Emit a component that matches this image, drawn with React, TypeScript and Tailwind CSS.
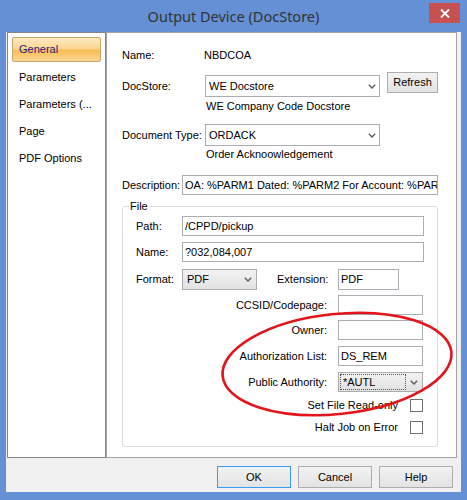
import type { ReactNode } from 'react';

const Chevron = () => (
  <svg width="8" height="5" viewBox="0 0 8 5" className="shrink-0">
    <path d="M0.8 0.8 L4 4 L7.2 0.8" fill="none" stroke="#5c5c5c" strokeWidth="1.4" />
  </svg>
);

function TextBox({ value = '', className = '' }: { value?: string; className?: string }) {
  return (
    <div
      className={`h-[20px] bg-white border border-[#abadb3] flex items-center pl-[2px] overflow-hidden whitespace-nowrap ${className}`}
    >
      {value}
    </div>
  );
}

function Combo({ value, className = '' }: { value: string; className?: string }) {
  return (
    <div
      className={`bg-white border border-[#abadb3] flex items-center pl-[3px] pr-[3px] justify-between ${className}`}
    >
      <span>{value}</span>
      <Chevron />
    </div>
  );
}

function Button({ children, focused = false }: { children: ReactNode; focused?: boolean }) {
  return (
    <div
      className={`w-[74px] h-[22px] flex items-center justify-center border bg-[linear-gradient(to_bottom,#f2f2f2,#e3e3e3)] ${
        focused ? 'border-[#3c9cf2]' : 'border-[#adadad]'
      }`}
    >
      {children}
    </div>
  );
}

function RightRow({ label, children, className = '' }: { label: string; children: ReactNode; className?: string }) {
  return (
    <div className={`flex items-center justify-end pr-[14px] ${className}`}>
      <span className="mr-[11px] whitespace-nowrap">{label}</span>
      {children}
    </div>
  );
}

function CheckRow({ label, className = '' }: { label: string; className?: string }) {
  return (
    <div className={`flex items-center justify-end pr-[14px] h-[13px] ${className}`}>
      <span className="mr-[12px] whitespace-nowrap">{label}</span>
      <div className="w-[13px] h-[13px] border border-[#707070] bg-white" />
    </div>
  );
}

const navItems = ['Parameters', 'Parameters (...', 'Page', 'PDF Options'];

export default function App() {
  return (
    <div className="relative w-[467px] h-[500px] bg-[#6590d5] flex flex-col text-[11px] leading-[13px] text-black font-['Liberation_Sans',Arial,sans-serif]">
      {/* Title bar */}
      <div className="h-[32px] shrink-0 grid grid-cols-[1fr_auto_1fr]">
        <div />
        <div className="self-center text-[14.5px] text-[#333] font-['Noto_Sans','Open_Sans',sans-serif] pt-[1px]">
          Output Device (DocStore)
        </div>
        <div className="justify-self-end mr-[7px] mt-[3px] w-[31px] h-[20px] bg-[#c75050] flex items-center justify-center">
          <svg width="10" height="9" viewBox="0 0 10 9">
            <path d="M1 0.5 L9 8.5 M9 0.5 L1 8.5" stroke="#fff" strokeWidth="1.8" />
          </svg>
        </div>
      </div>

      {/* Client area */}
      <div className="mx-[6px] mb-[8px] flex-1 bg-[#f0f0f0] flex flex-col">
        <div className="flex h-[426px] pl-[1px] pr-[4px]">
          {/* Nav */}
          <div className="w-[99px] border border-[#868686] bg-white pt-[4px] px-[4px]">
            <div className="h-[25px] w-[89px] border border-[#c9a868] rounded-[2px] bg-[linear-gradient(to_bottom,#fde9c2_0%,#fcd690_45%,#f9bd55_55%,#fcd793_100%)] flex items-center pl-[6px] text-[#1c1c78]">
              General
            </div>
            <div className="mt-[2px]">
              {navItems.map((item) => (
                <div key={item} className="h-[27px] flex items-center pl-[7px]">
                  {item}
                </div>
              ))}
            </div>
          </div>

          {/* Content */}
          <div className="flex-1 border border-[#a3a3a3] bg-white pl-[15px] pr-[18px]">
            <div className="mt-[14px] h-[16px] flex items-center">
              <span className="w-[82px]">Name:</span>
              <span>NBDCOA</span>
            </div>

            <div className="mt-[9px] h-[25px] flex items-start">
              <span className="w-[83px] h-[22px] mt-[3px] flex items-center">DocStore:</span>
              <Combo value="WE Docstore" className="mt-[3px] h-[22px] w-[175px]" />
              <div className="ml-[7px] w-[51px] h-[21px] border border-[#adadad] bg-[linear-gradient(to_bottom,#f2f2f2,#e3e3e3)] flex items-center justify-center">
                Refresh
              </div>
            </div>
            <div className="mt-[3px] ml-[84px]">WE Company Code Docstore</div>

            <div className="mt-[11px] h-[22px] flex items-center">
              <span className="w-[83px]">Document Type:</span>
              <Combo value="ORDACK" className="h-[22px] w-[175px]" />
            </div>
            <div className="mt-[2px] ml-[84px]">Order Acknoowledgement</div>

            <div className="mt-[14px] h-[20px] flex items-center">
              <span className="w-[60px]">Description:</span>
              <TextBox value="OA: %PARM1 Dated: %PARM2 For Account: %PARM3" className="w-[256px]" />
            </div>

            {/* File group */}
            <fieldset className="mt-[5px] w-[316px] border border-[#dcdcdc] rounded-[3px] pb-[12px]">
              <legend className="ml-[6px] px-[1px] leading-[12px]">File</legend>
              <div className="mt-[4px] flex items-center pl-[13px]">
                <span className="w-[46px]">Path:</span>
                <TextBox value="/CPPD/pickup" className="w-[242px]" />
              </div>
              <div className="mt-[6px] flex items-center pl-[13px]">
                <span className="w-[46px]">Name:</span>
                <TextBox value="?032,084,007" className="w-[242px]" />
              </div>
              <div className="mt-[6px] h-[22px] flex items-center pl-[13px]">
                <span className="w-[46px]">Format:</span>
                <div className="w-[75px] h-[21px] border border-[#acacac] bg-[linear-gradient(to_bottom,#f2f2f2,#e2e2e2)] flex items-center justify-between pl-[4px] pr-[4px]">
                  <span>PDF</span>
                  <Chevron />
                </div>
                <span className="ml-[20px] w-[61px]">Extension:</span>
                <TextBox value="PDF" className="w-[61px] h-[21px]" />
              </div>

              <RightRow label="CCSID/Codepage:" className="mt-[5px]">
                <TextBox className="w-[85px]" />
              </RightRow>
              <RightRow label="Owner:" className="mt-[5px]">
                <TextBox className="w-[85px]" />
              </RightRow>
              <RightRow label="Authorization List:" className="mt-[6px]">
                <TextBox value="DS_REM" className="w-[85px]" />
              </RightRow>
              <RightRow label="Public Authority:" className="mt-[6px]">
                <div className="w-[85px] h-[20px] border border-[#acacac] bg-[linear-gradient(to_bottom,#f2f2f2,#e2e2e2)] flex items-center justify-between pl-[1px] pr-[4px]">
                  <span className="w-[66px] h-[16px] border border-dotted border-[#555] flex items-center pl-[2px]">
                    *AUTL
                  </span>
                  <Chevron />
                </div>
              </RightRow>
              <CheckRow label="Set File Read-only" className="mt-[7px]" />
              <CheckRow label="Halt Job on Error" className="mt-[9px]" />
            </fieldset>
          </div>
        </div>

        {/* Buttons */}
        <div className="mt-[8px] flex justify-end gap-[7px] pr-[8px]">
          <Button focused>OK</Button>
          <Button>Cancel</Button>
          <Button>Help</Button>
        </div>
      </div>

      {/* Red annotation ellipse */}
      <svg
        className="absolute left-[215px] top-[307px] pointer-events-none"
        width="244"
        height="114"
        viewBox="0 0 244 114"
      >
        <ellipse
          cx="122"
          cy="57"
          rx="115"
          ry="50"
          transform="rotate(-6 122 57)"
          fill="none"
          stroke="#e3141c"
          strokeWidth="2.6"
        />
      </svg>
    </div>
  );
}
